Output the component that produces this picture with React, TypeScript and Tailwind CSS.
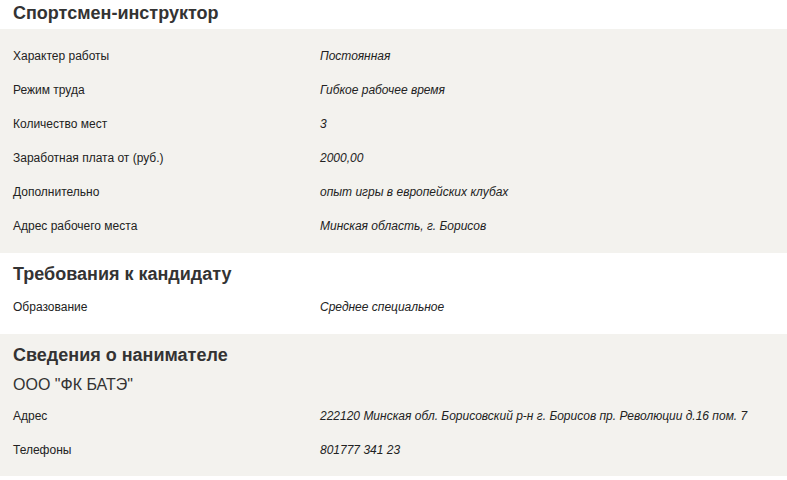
import React from "react";

interface Row {
    label: string;
    value: string;
}

const vacancyRows: Row[] = [
    { label: "Характер работы", value: "Постоянная" },
    { label: "Режим труда", value: "Гибкое рабочее время" },
    { label: "Количество мест", value: "3" },
    { label: "Заработная плата от (руб.)", value: "2000,00" },
    { label: "Дополнительно", value: "опыт игры в европейских клубах" },
    { label: "Адрес рабочего места", value: "Минская область, г. Борисов" },
];

const requirementRows: Row[] = [
    { label: "Образование", value: "Среднее специальное" },
];

const employerRows: Row[] = [
    {
        label: "Адрес",
        value: "222120 Минская обл. Борисовский р-н г. Борисов пр. Революции д.16 пом. 7",
    },
    { label: "Телефоны", value: "801777 341 23" },
];

function InfoRow({ row, height }: { row: Row; height: string }) {
    return (
        <div className={`grid grid-cols-[307px_1fr] items-center px-[13px] pt-[2px] ${height}`}>
            <span className="text-[12px] text-[#222]">{row.label}</span>
            <span className="text-[12px] italic text-[#222]">{row.value}</span>
        </div>
    );
}

function Title({ text, className }: { text: string; className: string }) {
    return (
        <div className={`flex items-center px-[13px] ${className}`}>
            <h2 className="text-[18px] font-bold text-[#333]">{text}</h2>
        </div>
    );
}

export default function App() {
    return (
        <div
            className="w-[787px] h-[480px] bg-white leading-none"
            style={{ fontFamily: '"Liberation Sans", Arial, sans-serif' }}
        >
            <Title text="Спортсмен-инструктор" className="h-[29px] pb-[4px]" />
            <div className="bg-[#f3f2ee] pt-[9px] pb-[11px]">
                {vacancyRows.map((row, i) => (
                    <InfoRow key={i} row={row} height="h-[34px]" />
                ))}
            </div>

            <div className="h-[81px]">
                <Title text="Требования к кандидату" className="h-[40px] pt-[2px]" />
                {requirementRows.map((row, i) => (
                    <InfoRow key={i} row={row} height="h-[26px]" />
                ))}
            </div>

            <div className="bg-[#f3f2ee] h-[142px]">
                <Title text="Сведения о нанимателе" className="h-[40px] pt-[2px]" />
                <div className="flex h-[20px] items-center px-[13px] pt-[2px] text-[16px] text-[#333]">
                    ООО "ФК БАТЭ"
                </div>
                <div className="mt-[4px]">
                    {employerRows.map((row, i) => (
                        <InfoRow key={i} row={row} height="h-[34px]" />
                    ))}
                </div>
            </div>
        </div>
    );
}
